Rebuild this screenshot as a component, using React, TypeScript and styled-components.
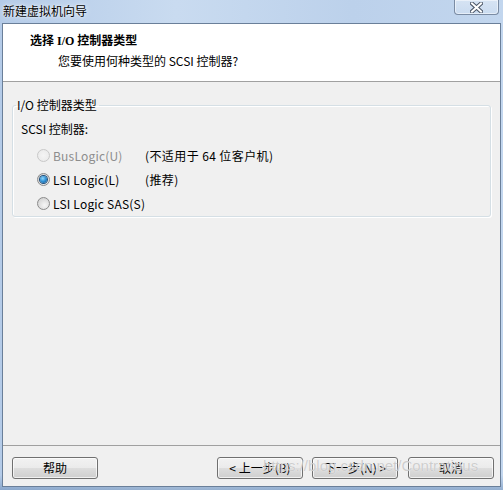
import React from "react";
import styled, { createGlobalStyle, css } from "styled-components";

const GlobalStyle = createGlobalStyle`
  html, body { margin: 0; padding: 0; background: #ffffff; }
  body { font-family: "Noto Sans CJK SC", "Noto Sans", sans-serif; font-size: 12px; color: #000; }
  * { box-sizing: border-box; }
`;

const Window = styled.div`
  position: relative;
  width: 503px;
  height: 490px;
  display: flex;
  flex-direction: column;
  background:
    linear-gradient(180deg, rgba(255,255,255,0) 0%, rgba(255,255,255,0) 97%, rgba(60,100,150,0.35) 100%),
    linear-gradient(90deg, #b4cbe8 0%, #c9dbf0 35%, #bcd1eb 70%, #c2d6ee 100%);
  overflow: hidden;
`;

const TitleBar = styled.div`
  height: 23px;
  display: flex;
  align-items: flex-start;
  padding-left: 3px;
`;

const TitleText = styled.span`
  line-height: 22px;
  font-size: 12px;
  color: #000;
  text-shadow: 0 0 6px rgba(255, 255, 255, 0.9), 0 0 2px rgba(255, 255, 255, 0.9);
`;

const CloseButton = styled.div`
  margin-left: auto;
  margin-right: 4px;
  width: 45px;
  height: 15px;
  border: 1px solid #7a8ba3;
  border-top: none;
  border-radius: 0 0 4px 4px;
  background: linear-gradient(180deg, rgba(255,255,255,0.35), rgba(255,255,255,0.15));
  box-shadow: inset 0 0 0 1px rgba(255, 255, 255, 0.5);
  display: flex;
  align-items: center;
  justify-content: center;
`;

const Client = styled.div`
  flex: 1;
  margin: 0 2px 3px 2px;
  border: 1px solid #6a7f99;
  background: #f0f0f0;
  display: flex;
  flex-direction: column;
`;

const Header = styled.div`
  height: 58px;
  background: #ffffff;
  border-bottom: 1px solid #a0a0a0;
  padding: 9px 0 0 27px;
  display: flex;
  flex-direction: column;
  gap: 4px;
`;

const HeaderTitle = styled.div`
  font-family: "Liberation Serif", "Noto Sans CJK SC", serif;
  font-weight: bold;
  line-height: 16px;
  font-size: 12px;
`;

const HeaderSub = styled.div`
  line-height: 16px;
  padding-left: 28px;
`;

const Body = styled.div`
  flex: 1;
  padding: 15px 8px 0 9px;
`;

const Group = styled.fieldset`
  margin: 0;
  width: 479px;
  border: 1px solid #d5dfe5;
  border-radius: 3px;
  padding: 8px 0 1px 8px;
  box-shadow: 1px 1px 0 #ffffff inset, 1px 1px 0 #ffffff;
`;

const Legend = styled.legend`
  margin-left: -5px;
  padding: 0 2px 0 1px;
  line-height: 16px;
`;

const FieldLabel = styled.div`
  line-height: 16px;
  margin-bottom: 6px;
`;

const OptionRow = styled.div`
  display: grid;
  grid-template-columns: 124px auto;
  height: 24px;
  align-items: center;
`;

const RadioLabel = styled.div<{ $disabled?: boolean }>`
  display: flex;
  align-items: center;
  gap: 3px;
  padding-left: 16px;
  white-space: nowrap;
  letter-spacing: 0.2px;
  color: ${(p) => (p.$disabled ? "#8d8d8d" : "#000")};
`;

const RadioCircle = styled.span<{ $checked?: boolean; $disabled?: boolean }>`
  width: 13px;
  height: 13px;
  border-radius: 50%;
  border: 1px solid ${(p) => (p.$disabled ? "#c8c8c8" : "#8b8b8b")};
  background: ${(p) =>
    p.$disabled
      ? "radial-gradient(circle at 50% 50%, #f4f4f4 0%, #e8e8e8 100%)"
      : "radial-gradient(circle at 60% 65%, #f6f6f6 0%, #dcdcdc 60%, #c9c9c9 100%)"};
  display: flex;
  align-items: center;
  justify-content: center;
  flex: none;
  ${(p) =>
    p.$checked &&
    css`
      &::after {
        content: "";
        width: 7px;
        height: 7px;
        border-radius: 50%;
        background: radial-gradient(circle at 40% 35%, #8fd6fb 0%, #2d8fd3 50%, #174f86 100%);
        box-shadow: 0 0 0 1px #1f4f7b;
      }
    `}
`;

const Note = styled.span`
  color: #000;
  white-space: nowrap;
  letter-spacing: 0.4px;
`;

const Footer = styled.div`
  border-top: 1px solid #a0a0a0;
  padding: 11px 6px 7px 9px;
  display: flex;
  align-items: center;
`;

const Spacer = styled.div`
  flex: 1;
`;

const Button = styled.div<{ $gap?: number }>`
  width: 86px;
  height: 22px;
  margin-left: ${(p) => p.$gap ?? 0}px;
  border: 1px solid #707070;
  border-radius: 3px;
  background: linear-gradient(180deg, #f2f2f2 0%, #ebebeb 48%, #dddddd 52%, #cfcfcf 100%);
  box-shadow: inset 0 0 0 1px rgba(255, 255, 255, 0.7);
  display: flex;
  align-items: center;
  justify-content: center;
  line-height: 16px;
  font-size: 12px;
  white-space: nowrap;
`;

const Watermark = styled.div`
  position: absolute;
  left: 263px;
  top: 457px;
  font-family: "Liberation Sans", Arial, sans-serif;
  font-size: 15px;
  line-height: 18px;
  color: rgba(190, 190, 190, 0.75);
  text-shadow: 0 0 1px rgba(255, 255, 255, 0.9);
  pointer-events: none;
  white-space: nowrap;
`;

const CloseIcon = () => (
  <svg width="13" height="11" viewBox="0 0 13 11">
    <path d="M2 1.5 L11 9.5 M11 1.5 L2 9.5" stroke="#4a5566" strokeWidth="4" strokeLinecap="square" />
    <path d="M2 1.5 L11 9.5 M11 1.5 L2 9.5" stroke="#ffffff" strokeWidth="2" strokeLinecap="square" />
  </svg>
);

export default function App() {
  return (
    <>
      <GlobalStyle />
      <Window>
        <TitleBar>
          <TitleText>新建虚拟机向导</TitleText>
          <CloseButton>
            <CloseIcon />
          </CloseButton>
        </TitleBar>
        <Client>
          <Header>
            <HeaderTitle>选择 I/O 控制器类型</HeaderTitle>
            <HeaderSub>您要使用何种类型的 SCSI 控制器?</HeaderSub>
          </Header>
          <Body>
            <Group>
              <Legend>I/O 控制器类型</Legend>
              <FieldLabel>SCSI 控制器:</FieldLabel>
              <OptionRow>
                <RadioLabel $disabled>
                  <RadioCircle $disabled />
                  BusLogic(U)
                </RadioLabel>
                <Note>(不适用于 64 位客户机)</Note>
              </OptionRow>
              <OptionRow>
                <RadioLabel>
                  <RadioCircle $checked />
                  LSI Logic(L)
                </RadioLabel>
                <Note>(推荐)</Note>
              </OptionRow>
              <OptionRow>
                <RadioLabel>
                  <RadioCircle />
                  LSI Logic SAS(S)
                </RadioLabel>
              </OptionRow>
            </Group>
          </Body>
          <Footer>
            <Button>帮助</Button>
            <Spacer />
            <Button>&lt; 上一步(B)</Button>
            <Button $gap={9}>下一步(N) &gt;</Button>
            <Button $gap={10}>取消</Button>
          </Footer>
        </Client>
        <Watermark>https://blog.csdn.net/Contratious</Watermark>
      </Window>
    </>
  );
}
